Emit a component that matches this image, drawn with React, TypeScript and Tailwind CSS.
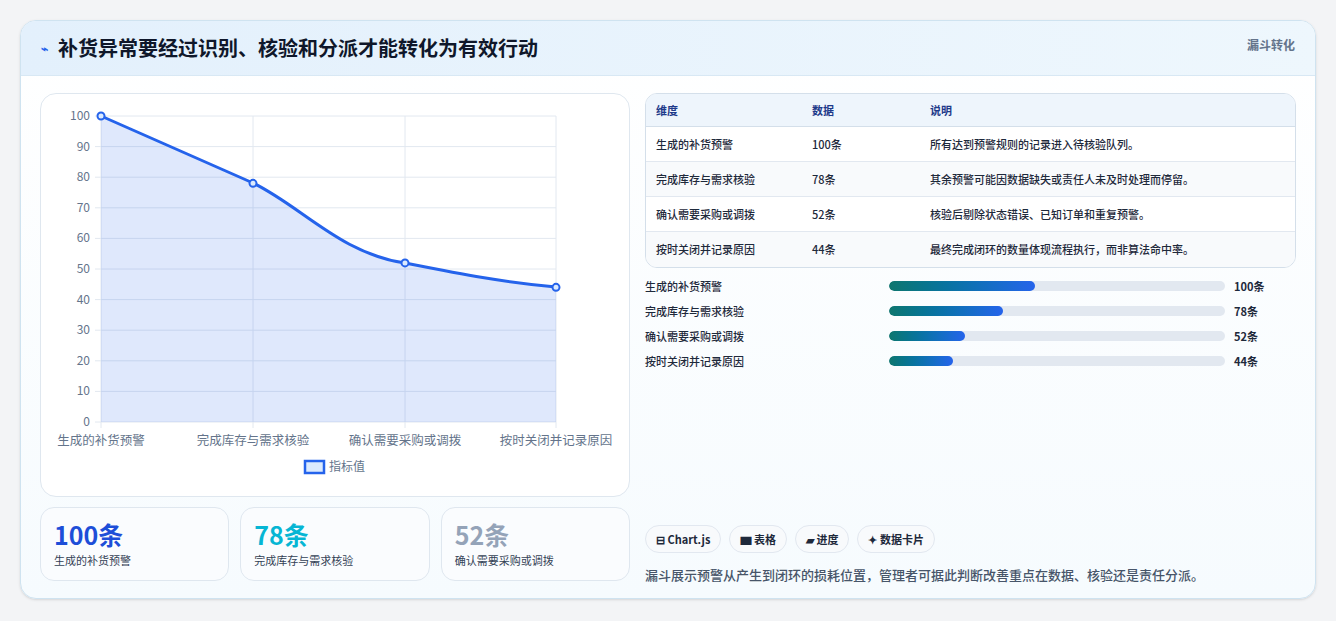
import React from 'react';

const rows = [
  { name: '生成的补货预警', value: 100, note: '所有达到预警规则的记录进入待核验队列。', bar: 43.5 },
  { name: '完成库存与需求核验', value: 78, note: '其余预警可能因数据缺失或责任人未及时处理而停留。', bar: 34 },
  { name: '确认需要采购或调拨', value: 52, note: '核验后剔除状态错误、已知订单和重复预警。', bar: 22.6 },
  { name: '按时关闭并记录原因', value: 44, note: '最终完成闭环的数量体现流程执行，而非算法命中率。', bar: 19 },
];

const font = { fontFamily: '"Noto Sans CJK SC", "Liberation Sans", sans-serif' };

const Chart: React.FC = () => {
  const xs = [60, 212, 364, 515];
  const yOf = (v: number) => 328 - v * 3.06;
  const pts = rows.map((r, i) => [xs[i], yOf(r.value)]);
  return (
    <svg width="589" height="403" className="block" style={font}>
      {Array.from({ length: 11 }).map((_, i) => {
        const y = 22 + 30.6 * i;
        return (
          <g key={i}>
            <line x1={54} x2={515} y1={y} y2={y} stroke="#e2e8f0" />
            <text x={49} y={y + 4} textAnchor="end" fontSize="12" fill="#64748b">{100 - i * 10}</text>
          </g>
        );
      })}
      {xs.map((x) => (
        <line key={x} x1={x} x2={x} y1={22} y2={334} stroke="#e2e8f0" />
      ))}
      <path
        d="M60 22 C110 44,160 66,212 89 C260 112,300 160,364 169 C420 180,460 188,515 193 L515 328 L60 328 Z"
        fill="#2563eb" fillOpacity="0.15"
      />
      <path
        d="M60 22 C110 44,160 66,212 89 C260 112,300 160,364 169 C420 180,460 188,515 193"
        fill="none" stroke="#2563eb" strokeWidth="3"
      />
      {pts.map(([x, y], i) => (
        <circle key={i} cx={x} cy={y} r="3.5" fill="#dbeafe" stroke="#2563eb" strokeWidth="2" />
      ))}
      {rows.map((r, i) => (
        <text key={r.name} x={xs[i]} y={351} textAnchor="middle" fontSize="12.5" fill="#64748b">{r.name}</text>
      ))}
      <rect x={264} y={367} width={19} height={12} fill="#dbeafe" stroke="#2563eb" strokeWidth="2.5" />
      <text x={288} y={377} fontSize="12" fill="#64748b">指标值</text>
    </svg>
  );
};

const App: React.FC = () => {
  return (
    <div className="w-[1336px] h-[621px] bg-[#f3f4f6] pt-[20px] pl-[20px]" style={font}>
      <div className="w-[1296px] h-[579px] rounded-[16px] border border-[#cfe3f0] bg-gradient-to-b from-white to-[#f6fbfe] overflow-hidden shadow-sm flex flex-col">
        {/* Header */}
        <div className="h-[55px] flex items-center justify-between px-[20px] bg-gradient-to-r from-[#e3f0fc] to-[#eef7fd] border-b border-[#d8e8f4]">
          <div className="flex items-center gap-[10px]">
            <span className="text-[#2563eb] text-[12px] font-bold">⌁</span>
            <h1 className="text-[20px] font-bold text-[#0f172a]">补货异常要经过识别、核验和分派才能转化为有效行动</h1>
          </div>
          <span className="text-[12px] font-bold text-[#64748b] self-start mt-[15px]">漏斗转化</span>
        </div>

        <div className="flex gap-[15px] px-[19px] pt-[17px]">
          {/* Left column */}
          <div className="w-[590px] flex flex-col gap-[10px]">
            <div className="h-[404px] rounded-[16px] border border-[#dfe7ef] bg-white overflow-hidden">
              <Chart />
            </div>
            <div className="grid grid-cols-3 gap-[11px]">
              {[
                { v: '100条', c: 'text-[#1d4ed8]', l: '生成的补货预警' },
                { v: '78条', c: 'text-[#06b6d4]', l: '完成库存与需求核验' },
                { v: '52条', c: 'text-[#94a3b8]', l: '确认需要采购或调拨' },
              ].map((s) => (
                <div key={s.l} className="h-[74px] rounded-[14px] border border-[#dfe7ef] bg-[#fafcfe] px-[13px] pt-[10px]">
                  <div className={`text-[25px] leading-[32px] font-bold ${s.c}`}>{s.v}</div>
                  <div className="text-[11px] text-[#334155] mt-[2px]">{s.l}</div>
                </div>
              ))}
            </div>
          </div>

          {/* Right column */}
          <div className="flex-1 flex flex-col">
            <div className="rounded-[12px] border border-[#d4dfea] overflow-hidden bg-white">
              <div className="grid grid-cols-[156px_118px_1fr] h-[33px] items-center px-[10px] bg-[#eef5fc] border-b border-[#d4dfea] text-[11px] font-bold text-[#1e3a8a]">
                <span>维度</span><span>数据</span><span>说明</span>
              </div>
              {rows.map((r, i) => (
                <div key={r.name} className={`grid grid-cols-[156px_118px_1fr] h-[35px] items-center px-[10px] text-[11px] font-medium text-[#1e293b] ${i % 2 ? 'bg-[#f8fafc]' : 'bg-white'} ${i < 3 ? 'border-b border-[#e2e8f0]' : ''}`}>
                  <span>{r.name}</span><span>{r.value}条</span><span>{r.note}</span>
                </div>
              ))}
            </div>

            <div className="flex flex-col gap-[9px] mt-[10px]">
              {rows.map((r) => (
                <div key={r.name} className="flex items-center h-[16px] text-[11px] font-medium text-[#1e293b]">
                  <span className="w-[244px]">{r.name}</span>
                  <div className="w-[336px] h-[10px] rounded-full bg-[#e2e8f0] overflow-hidden">
                    <div className="h-full rounded-full bg-gradient-to-r from-[#0f766e] to-[#2563eb]" style={{ width: `${r.bar}%` }} />
                  </div>
                  <span className="ml-[9px] font-bold">{r.value}条</span>
                </div>
              ))}
            </div>

            <div className="flex gap-[8px] mt-[156px]">
              {['⊟ Chart.js', '▆ 表格', '▰ 进度', '✦ 数据卡片'].map((t) => (
                <span key={t} className="h-[28px] px-[10px] rounded-full border border-[#e2e8f0] bg-[#f8fafc] text-[11px] font-bold text-[#1e293b] flex items-center">{t}</span>
              ))}
            </div>
            <p className="text-[13px] font-medium text-[#475569] mt-[12px]">漏斗展示预警从产生到闭环的损耗位置，管理者可据此判断改善重点在数据、核验还是责任分派。</p>
          </div>
        </div>
      </div>
    </div>
  );
};

export default App;
